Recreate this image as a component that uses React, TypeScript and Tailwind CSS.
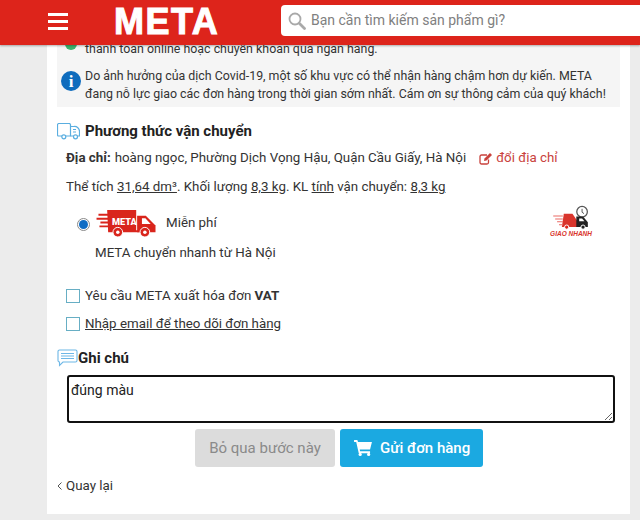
import React from 'react'

const TruckOutline = () => (
  <svg width="23" height="17" viewBox="0 0 23 17" fill="none" stroke="#5aaee0" strokeWidth="1.2">
    <path d="M5 13H1.5a1 1 0 0 1-1-1V2a1.500 1.500 0 0 1 1.500-1.500h10a1.500 1.500 0 0 1 1.500 1.500v11H8.500" />
    <path d="M13.500 3.500h3.500a5 5 0 0 1 5.500 5v4.500h-2M16.500 13h-3" />
    <circle cx="6.800" cy="13.800" r="2" />
    <circle cx="18.500" cy="13.800" r="2" />
    <path d="M16 6.500h3M16 9h3" />
  </svg>
)

const MetaTruck = () => (
  <svg className="ml-[1px]" width="61" height="29" viewBox="0 0 62 30">
    <path d="M11 1h30v22H12z" fill="#d9251c" />
    <path d="M42 7h9l10 10v7H42z" fill="#d9251c" />
    <path d="M47 9.500h3.500l5.500 6h-9z" fill="#fff" />
    <path d="M2 5h13v2H2zM0 9h14v2H0zM4 13h10v2H4zM3 17h11v2H3z" fill="#d9251c" />
    <path d="M12 22h34v2H12z" fill="#d9251c" />
    <text x="16" y="17" fill="#fff" fontFamily="Roboto, sans-serif" fontWeight="900" fontSize="9.500">META</text>
    <circle cx="22" cy="24" r="5" fill="#d9251c" stroke="#fff" strokeWidth="1" />
    <circle cx="22" cy="24" r="1.800" fill="#fff" />
    <circle cx="50" cy="24" r="5" fill="#d9251c" stroke="#fff" strokeWidth="1" />
    <circle cx="50" cy="24" r="1.800" fill="#fff" />
  </svg>
)

const FastDelivery = () => (
  <div className="flex flex-col items-center">
    <svg width="37" height="25" viewBox="0 0 38 26">
      <circle cx="30" cy="7" r="5.500" fill="#fff" stroke="#555" strokeWidth="1.300" />
      <path d="M30 4v3.500l2 1.500" fill="none" stroke="#555" strokeWidth="1" />
      <path d="M11 9h9l6 9v5H9z" fill="#d9352c" />
      <path d="M24 12h7l5 6v5H24z" fill="#222" />
      <path d="M27 14h3l2.500 3H27z" fill="#fff" />
      <path d="M0 11h10v1H0zM2 14h8v1H2zM4 17h6v1H4zM6 20h4v1H6z" fill="#ea6a64" />
      <circle cx="14" cy="23" r="2.200" fill="#d9251c" stroke="#fff" />
      <circle cx="31" cy="23" r="2.200" fill="#222" stroke="#fff" />
    </svg>
    <span className="text-[6.500px] leading-[8px] font-bold italic text-[#d9352c] font-['Liberation_Sans',sans-serif]">GIAO NHANH</span>
  </div>
)

const App = () => {
  return (
    <div className="relative h-[520px] w-[640px] overflow-hidden bg-[#ececec] font-['Roboto',sans-serif] text-[13.33px] text-[#333]">
      <header className="absolute inset-x-0 top-0 z-10 flex h-[45px] items-start bg-[#dd241b] shadow-[0_1px_2px_rgba(0,0,0,0.3)]">
        <div className="ml-12 mt-[13px] flex w-5 flex-col gap-[4px]">
          <span className="h-[3px] bg-white" />
          <span className="h-[3px] bg-white" />
          <span className="h-[3px] bg-white" />
        </div>
        <div className="ml-[46px] mt-[1px] w-[120px] text-[36px] leading-[41px] font-bold tracking-[1.500px] text-white [-webkit-text-stroke:1px_white] font-['Liberation_Sans',sans-serif]">META</div>
        <div className="ml-[47px] mt-[5px] flex h-[31px] flex-1 items-center rounded-l-sm bg-white pl-[7px]">
          <svg width="18" height="18" viewBox="0 0 18 18" fill="none" stroke="#a9a9a9">
            <circle cx="7" cy="7" r="5.500" strokeWidth="1.800" />
            <path d="M11.500 11.500l5 5" strokeWidth="2.800" strokeLinecap="round" />
          </svg>
          <span className="ml-[5px] text-[14px] text-[#808080]">Bạn cần tìm kiếm sản phẩm gì?</span>
        </div>
      </header>

      <main className="ml-[47px] flex h-[514px] w-[583px] flex-col bg-white px-[10px]">
        <section className="mt-[41px] h-[66px] bg-[#f5f5f5] pt-[2px] pr-2 text-[12.400px]">
          <div className="flex">
            <span className="ml-2 mt-[-5px] h-[12px] w-[12px] rounded-full bg-[#3cb46e]" />
            <p className="ml-2 h-[12px] leading-[12px]">thanh toán online hoặc chuyển khoản qua ngân hàng.</p>
          </div>
          <div className="mt-[12px] flex">
            <span className="ml-[4px] mt-[4px] flex h-[20px] w-[20px] shrink-0 items-center justify-center rounded-full bg-[#0f6cbd] font-['Liberation_Serif',serif] text-[17px] font-bold leading-none text-white">i</span>
            <p className="ml-[4px] leading-[18px]">
              Do ảnh hưởng của dịch Covid-19, một số khu vực có thể nhận hàng chậm hơn dự kiến. META đang nỗ lực giao các đơn hàng trong thời gian sớm nhất. Cám ơn sự thông cảm của quý khách!
            </p>
          </div>
        </section>

        <div className="mt-[14px] flex items-center">
          <TruckOutline />
          <h2 className="ml-[5px] text-[15px] leading-5 font-bold text-[#222]">Phương thức vận chuyển</h2>
        </div>

        <div className="ml-[9px] mt-[7px] flex h-5 items-center">
          <b className="font-bold">Địa chỉ:</b>
          <span className="ml-1">hoàng ngọc, Phường Dịch Vọng Hậu, Quận Cầu Giấy, Hà Nội</span>
          <svg className="ml-[13px]" width="14" height="13" viewBox="0 0 14 13" fill="none" stroke="#c9423c" strokeWidth="1.300">
            <path d="M9.500 7.500v3a1.500 1.500 0 0 1-1.500 1.500H2.500A1.500 1.500 0 0 1 1 10.500V4.500A1.500 1.500 0 0 1 2.500 3H8" />
            <path d="M5.500 6.500L11 1l2 2-5.500 5.500-2.500.5z" fill="#c9423c" stroke="none" />
          </svg>
          <span className="ml-[3px] text-[#c9423c]">đổi địa chỉ</span>
        </div>

        <p className="ml-[9px] mt-[9px] h-5 leading-5">
          Thể tích <u>31,64 dm³</u>. Khối lượng <u>8,3 kg</u>. KL <u>tính</u> vận chuyển: <u>8,3 kg</u>
        </p>

        <div className="mt-[11px] flex items-start justify-between">
          <div className="ml-[20px] flex items-start">
            <span className="mt-[10px] flex h-[13px] w-[13px] items-center justify-center rounded-full border border-[#8a8a8a] bg-white">
              <span className="h-[9px] w-[9px] rounded-full bg-[#0f6cc4]" />
            </span>
            <div className="ml-[5px]">
              <div className="mt-[1px] flex items-center">
                <MetaTruck />
                <span className="mb-[2px] ml-[9px]">Miễn phí</span>
              </div>
              <p className="mt-[5px] h-5 leading-5">META chuyển nhanh từ Hà Nội</p>
            </div>
          </div>
          <div className="mr-[28px] mt-[-3px]">
            <FastDelivery />
          </div>
        </div>

        <label className="ml-[9px] mt-[23px] flex h-5 items-center">
          <span className="h-[14px] w-[14px] border-[1.500px] border-[#67aec4]" />
          <span className="ml-[5px]">Yêu cầu META xuất hóa đơn <b className="font-bold">VAT</b></span>
        </label>
        <label className="ml-[9px] mt-[8px] flex h-5 items-center">
          <span className="h-[14px] w-[14px] border-[1.500px] border-[#67aec4]" />
          <u className="ml-[5px]">Nhập email để theo dõi đơn hàng</u>
        </label>

        <div className="mt-[14px] flex h-5 items-center">
          <svg width="21" height="18" viewBox="0 0 21 18" fill="none" stroke="#6db7e6" strokeWidth="1.100">
            <path d="M2.500 1h16A1.500 1.500 0 0 1 20 2.500v9a1.500 1.500 0 0 1-1.500 1.500H6l-3.500 3.500V13A1.500 1.500 0 0 1 1 11.500v-9A1.500 1.500 0 0 1 2.500 1z" />
            <path d="M4 4.500h13M4 7h13M4 9.500h13" />
          </svg>
          <h2 className="text-[15px] leading-5 font-bold text-[#222]">Ghi chú</h2>
        </div>

        <textarea
          readOnly
          value="đúng màu"
          className="mt-[7px] ml-[10px] h-[48px] w-[548px] rounded-[3px] border-2 border-[#111] px-[2px] pt-[2px] text-[14px] leading-[22px] text-[#222] outline-none"
        />

        <div className="ml-[138px] mt-[6px] flex gap-[5px]">
          <button className="h-[38px] w-[140px] rounded-[3px] bg-[#dcdcdc] text-[15px] text-[#8a8a8a]">Bỏ qua bước này</button>
          <button className="flex h-[38px] w-[143px] items-center rounded-[3px] bg-[#1ba9e1] pl-[14px] text-[15px] font-medium text-white">
            <svg width="18" height="16" viewBox="0 0 19 17" fill="#fff">
              <path d="M0 0h3.500l.7 2H19l-2 8H6l.4 2H17v2H5L2.300 2H0z" />
              <circle cx="6.500" cy="15.300" r="1.700" />
              <circle cx="15.500" cy="15.300" r="1.700" />
            </svg>
            <span className="ml-[8px]">Gửi đơn hàng</span>
          </button>
        </div>

        <div className="mt-[9px] flex h-5 items-center">
          <svg width="5" height="8" viewBox="0 0 5 8" fill="none" stroke="#555" strokeWidth="1">
            <path d="M4.500.5L1 4l3.500 3.500" />
          </svg>
          <span className="ml-[4px]">Quay lại</span>
        </div>
      </main>
    </div>
  )
}

export default App
